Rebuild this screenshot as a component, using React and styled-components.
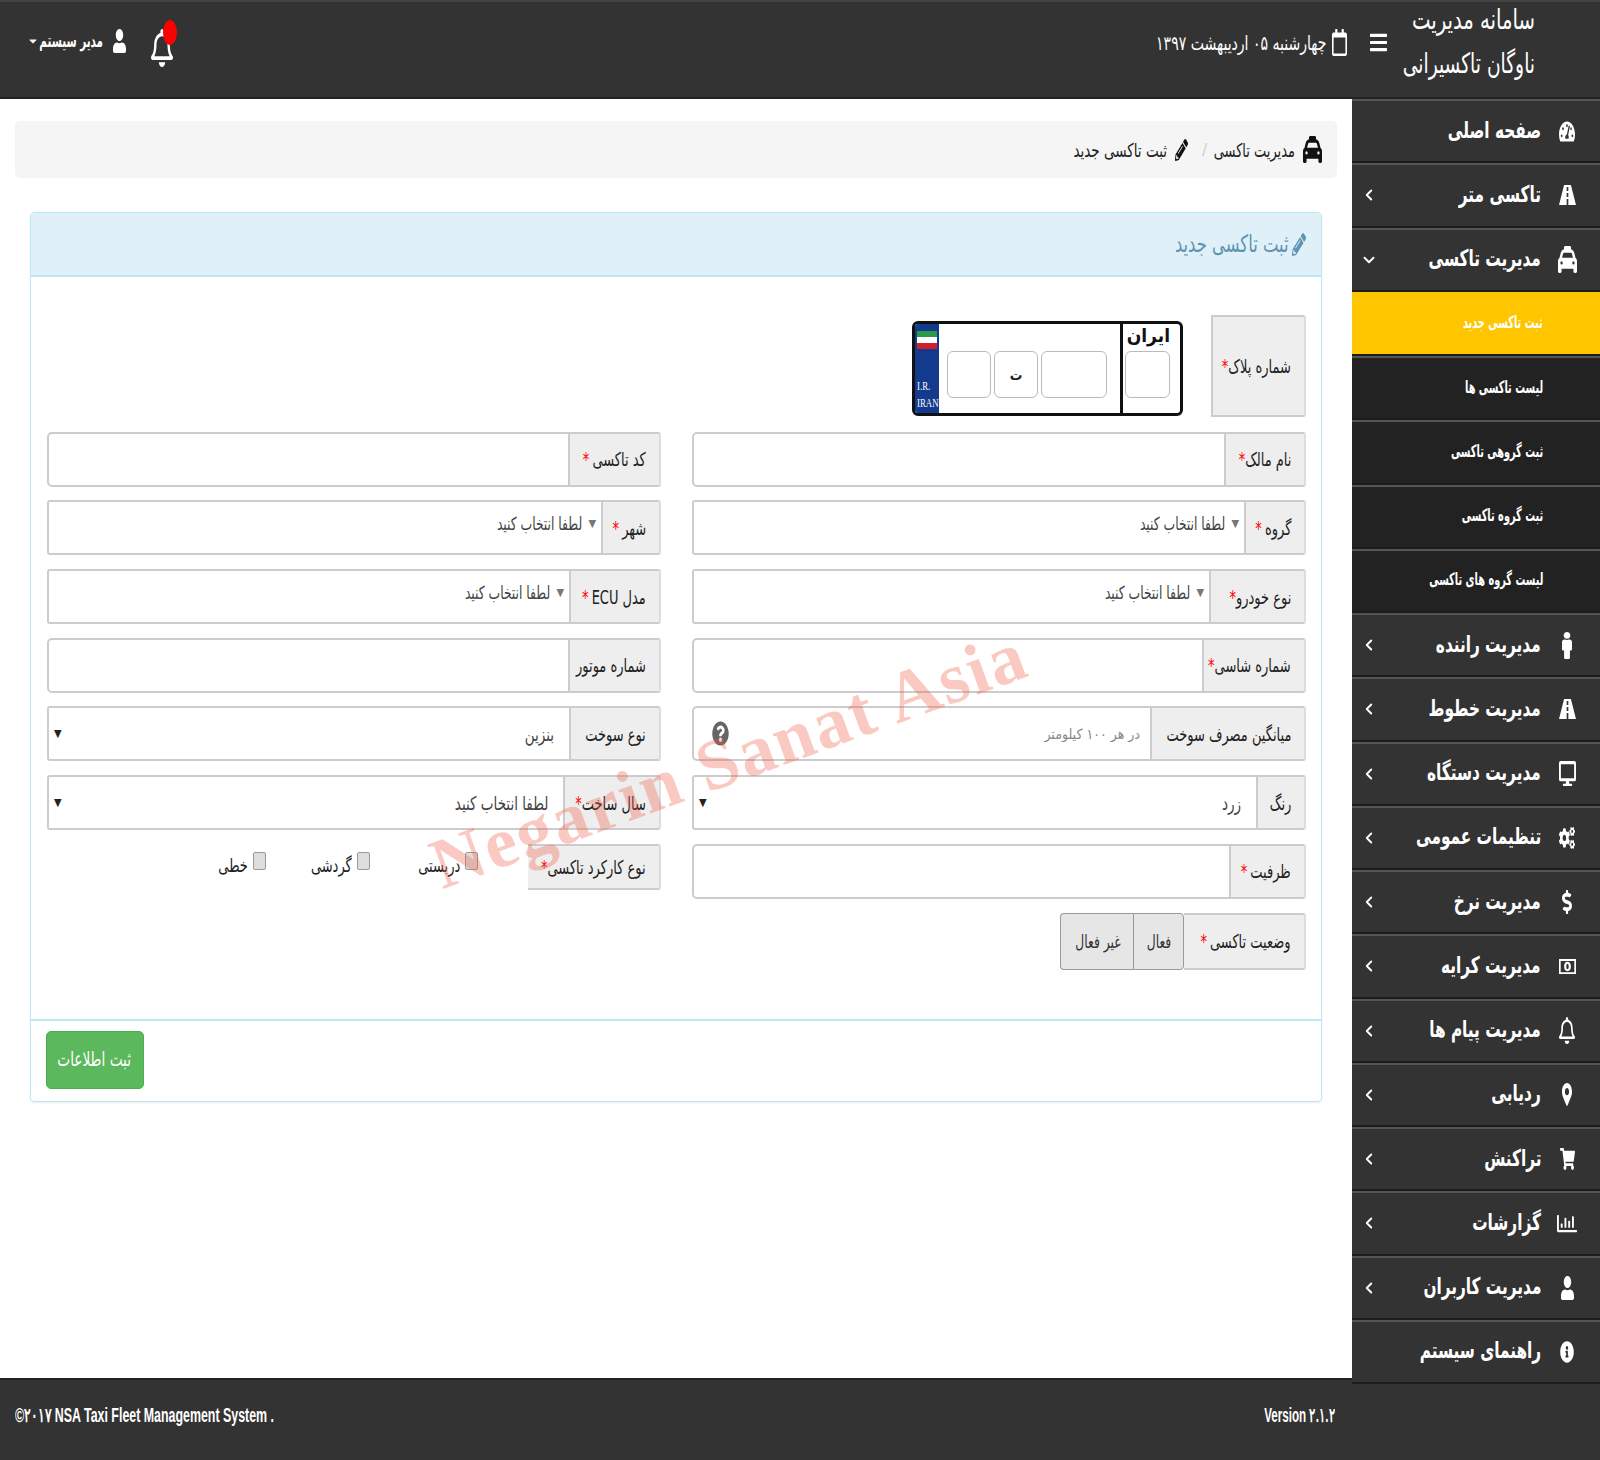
import React from 'react';
import styled, { createGlobalStyle } from 'styled-components';
import {
  FaTachometerAlt, FaMale, FaDesktop, FaCogs, FaDollarSign,
  FaRegBell, FaMapMarkerAlt, FaShoppingCart, FaRegChartBar, FaUser, FaInfoCircle, FaBars,
  FaRegCalendar, FaPencilAlt, FaCaretDown, FaQuestionCircle,
} from 'react-icons/fa';
import { FaTaxi } from 'react-icons/fa6';
import { ChevronLeft, ChevronDown } from 'lucide-react';

const FONT = `"DejaVu Sans Condensed", "DejaVu Sans", sans-serif`;

const Global = createGlobalStyle`
  html, body { margin: 0; padding: 0; background: #fff; }
  body { font-family: ${FONT}; color: #333; }
  * { box-sizing: border-box; }
`;

const Page = styled.div`
  position: relative;
  width: 1600px;
  height: 1460px;
  display: flex;
  flex-direction: column;
  direction: rtl;
  overflow: hidden;
`;

// the reference font is tall and narrow, so text is squeezed sideways from its start
const Narrow = styled.span`
  display: inline-block;
  white-space: nowrap;
  transform: scaleX(${p => p.$x || 0.76});
  transform-origin: 100% 50%;
  ${p => p.$w && `width: ${p.$w}px;`}
`;

const GlyphBox = styled.span`
  display: flex;
  flex: none;
  width: ${p => p.$w}px;
  height: ${p => p.$h}px;
  svg { width: 100%; height: 100%; display: block; }
`;

const Glyph = ({ icon: Icon, w, h }) => (
  <GlyphBox $w={w} $h={h}>
    <Icon preserveAspectRatio="none" />
  </GlyphBox>
);

const RoadIcon = props => (
  <svg viewBox="0 0 20 20" fill="currentColor" {...props}>
    <path
      fillRule="evenodd"
      d="M6 0H14L20 20H0ZM9 2V6H11V2ZM9 8V12H11V8ZM9 14V20H11V14Z"
    />
  </svg>
);

const CashIcon = props => (
  <svg viewBox="0 0 20 16" fill="currentColor" {...props}>
    <path
      fillRule="evenodd"
      d="M0 0H20V16H0ZM2 2V14H18V2ZM10 3C12.5 3 14 5 14 8S12.5 13 10 13 6 11 6 8 7.5 3 10 3ZM10 5C9 5 8.6 6.5 8.6 8S9 11 10 11 11.4 9.500 11.400 8 11 5 10 5Z"
    />
  </svg>
);

const Header = styled.header`
  height: 99px;
  flex: none;
  background: #333;
  border-top: 2px solid #444;
  border-bottom: 2px solid #222;
  padding-bottom: 14px;
  display: flex;
  align-items: center;
  color: #fff;
`;

const Brand = styled.div`
  width: 248px;
  flex: none;
  padding: 0 65px 1px 0;
  font-size: 28px;
  line-height: 44px;
`;

const BrandLine = styled(Narrow)`
  display: block;
`;

const MenuToggle = styled.div`
  flex: none;
  margin-right: -35px;
`;

const DateBox = styled.div`
  display: flex;
  align-items: center;
  gap: 6px;
  margin-right: 23px;
  font-size: 20px;
`;

const HeaderLeft = styled.div`
  margin-right: auto;
  margin-left: 27px;
  display: flex;
  align-items: center;
`;

const UserBox = styled.div`
  display: flex;
  align-items: center;
  gap: 10px;
  margin: 0 25px 4px 0;
  font-size: 18px;
  font-weight: 700;
`;

const Caret = styled.span`
  display: flex;
  margin-right: -9px;
`;

const BellBox = styled.div`
  position: relative;
  margin-top: 11px;
`;

const BellBadge = styled.span`
  position: absolute;
  top: -9px;
  left: 12px;
  width: 14px;
  height: 25px;
  border-radius: 50%;
  background: #f00;
`;

const Middle = styled.div`
  flex: 1;
  display: flex;
  min-height: 0;
`;

const Sidebar = styled.nav`
  width: 248px;
  flex: none;
  background: #333;
  margin-bottom: -6px;
  position: relative;
  z-index: 2;
`;

const NavItem = styled.div`
  height: 64.25px;
  display: flex;
  align-items: center;
  background: ${p => (p.$current ? '#ffc600' : p.$sub ? '#222' : '#333')};
  border-top: 2px solid ${p => (p.$current ? '#ffc600' : '#555')};
  border-bottom: 2px solid #1c1c1c;
  color: #fff;
  padding-right: ${p => (p.$sub ? '57px' : '20px')};
  padding-left: 8px;
`;

const NavIcon = styled.span`
  width: 26px;
  flex: none;
  display: flex;
  justify-content: center;
  margin-left: 13px;
`;

const NavLabel = styled.span`
  flex: 1;
  min-width: 0;
  padding-bottom: 3px;
  font-size: ${p => (p.$sub ? '17px' : '23px')};
  font-weight: 700;
`;

const NavArrow = styled.span`
  display: flex;
  flex: none;
`;

const Main = styled.main`
  flex: 1;
  min-width: 0;
  padding: 22px 15px 0;
`;

const Crumbs = styled.div`
  height: 57px;
  background: #f5f5f5;
  border-radius: 5px;
  display: flex;
  align-items: center;
  padding-right: 15px;
  gap: 8px;
  font-size: 19px;
  color: #222;
  margin-bottom: 34px;
  svg { color: #111; }
`;

const CrumbSep = styled.span`
  color: #ccc;
  margin: 0 1px 0 6px;
  font-size: 16px;
`;

const Panel = styled.section`
  height: 890px;
  margin: 0 15px;
  border: 1px solid #bce8f1;
  border-radius: 4px;
  display: flex;
  flex-direction: column;
  box-shadow: 0 1px 2px rgba(0, 0, 0, 0.08);
`;

const PanelHead = styled.div`
  height: 64px;
  flex: none;
  background: #dff0f8;
  border-bottom: 2px solid #bce8f1;
  color: #5f93b3;
  font-size: 24px;
  display: flex;
  align-items: center;
  gap: 3px;
  padding-right: 15px;
`;

const PanelBody = styled.div`
  flex: 1;
  padding: 38px 15px 0 16px;
`;

const PanelFoot = styled.div`
  height: 82px;
  flex: none;
  border-top: 2px solid #bce8f1;
  padding: 10px 15px;
`;

const Submit = styled.button`
  display: flex;
  align-items: center;
  justify-content: center;
  padding: 0 0 3px;
  margin-right: auto;
  width: 98px;
  height: 58px;
  border: 1px solid #4cae4c;
  border-radius: 5px;
  background: #5cb85c;
  color: #fff;
  font-family: ${FONT};
  font-size: 20px;
`;

const FormGrid = styled.div`
  display: grid;
  grid-template-columns: 614px 614px;
  column-gap: 31px;
  row-gap: 13.7px;
`;

const PlateRow = styled.div`
  grid-column: 1 / -1;
  display: flex;
  align-items: flex-start;
  gap: 28px;
  height: 102px;
  margin-bottom: 1px;
`;

const Field = styled.div`
  display: flex;
  height: ${p => p.$h || 55}px;
`;

const Label = styled.label`
  width: ${p => p.$w}px;
  flex: none;
  background: #eee;
  border: 2px solid #ccc;
  border-left-width: ${p => (p.$flat ? '2px' : '0')};
  border-right-color: #ddd;
  border-radius: 0 3px 3px 0;
  padding-right: 13px;
  display: flex;
  align-items: center;
  font-size: 19px;
  color: #222;
`;

const Star = styled.span`
  color: #f00;
  margin-right: ${p => (p.$tight ? 0 : 4)}px;
`;

const TextInput = styled.input`
  flex: 1;
  min-width: 0;
  border: 2px solid #ccc;
  border-radius: 5px 0 0 5px;
  background: #fff;
  padding: 0 10px;
  font-family: ${FONT};
  font-size: 16px;
  outline: none;
`;

const Picker = styled.div`
  flex: 1;
  min-width: 0;
  display: flex;
  align-items: center;
  gap: 6px;
  border: 2px solid #ccc;
  border-radius: 3px 0 0 3px;
  padding: 0 ${p => (p.$native ? 15 : 5)}px ${p => (p.$native ? 0 : 8)}px 5px;
  font-size: ${p => (p.$native ? 19 : 18)}px;
  color: #444;
`;

const PickerArrow = styled.span`
  color: #777;
  font-size: 11px;
  line-height: 1;
  ${p => p.$end && 'margin-right: auto; color: #222;'}
`;

const HintWrap = styled.div`
  position: relative;
  flex: 1;
  display: flex;
`;

const HintIcon = styled.span`
  position: absolute;
  left: 20px;
  top: 15px;
  color: #666;
`;

const Hint = styled(TextInput)`
  font-size: 14px;
  &::placeholder { color: #888; }
`;

const Checks = styled.div`
  flex: 1;
  display: flex;
  align-items: center;
  padding: 0 50px 3px 0;
  font-size: 19px;
  color: #222;
`;

const CheckItem = styled.label`
  display: flex;
  align-items: center;
  gap: 5px;
  width: ${p => p.$w}px;
`;

const CheckBox = styled.input`
  appearance: none;
  width: 13px;
  height: 18px;
  margin: 0 0 8px;
  background: #ddd;
  border: 1px solid #999;
  border-radius: 2px;
`;

const Toggle = styled.div`
  display: flex;
`;

const ToggleButton = styled.button`
  height: 57px;
  width: ${p => p.$w}px;
  padding: 0 12px;
  border: 1px solid #999;
  border-right-width: ${p => (p.$first ? '1px' : '0')};
  border-radius: ${p => (p.$first ? '0 4px 4px 0' : '4px 0 0 4px')};
  background: #e6e6e6;
  color: #333;
  font-family: ${FONT};
  font-size: 18px;
  text-align: right;
`;

const Plate = styled.div`
  width: 271px;
  height: 95px;
  margin-top: 6px;
  border: 3px solid #111;
  border-radius: 6px;
  display: flex;
  background: #fff;
  overflow: hidden;
`;

const PlateRegion = styled.div`
  width: 60px;
  flex: none;
  border-left: 3px solid #111;
  padding-right: 10px;
  display: flex;
  flex-direction: column;
  align-items: flex-start;
`;

const PlateName = styled.span`
  height: 27px;
  font-size: 19px;
  font-weight: 700;
  line-height: 22px;
  color: #111;
`;

const PlateCell = styled.input`
  width: ${p => p.$w}px;
  height: 47px;
  border: 1px solid #bbb;
  border-radius: 6px;
  background: #fff;
  text-align: center;
  padding: 0;
`;

const PlateMain = styled.div`
  flex: 1;
  display: flex;
  align-items: flex-start;
  gap: 3px;
  padding: 27px 13px 0 0;
`;

const PlateLetter = styled.div`
  width: 44px;
  height: 47px;
  border: 1px solid #bbb;
  border-radius: 6px;
  display: flex;
  align-items: center;
  justify-content: center;
  font-size: 14px;
  font-weight: 700;
  color: #222;
`;

const PlateBlue = styled.div`
  width: 24px;
  flex: none;
  background: #133a8c;
  color: #fff;
  direction: ltr;
  display: flex;
  flex-direction: column;
  padding: 6px 0 2px 2px;
  font-family: "Liberation Serif", serif;
  font-size: 13px;
  line-height: 17px;
`;

const PlateBlueLine = styled.span`
  display: block;
  transform: scaleX(0.68);
  transform-origin: 0 50%;
  white-space: nowrap;
`;

const PlateFlag = styled.svg`
  width: 20px;
  height: 20px;
  margin-bottom: auto;
`;

const Footer = styled.footer`
  height: 82px;
  flex: none;
  background: #333;
  border-top: 2px solid #222;
  color: #fff;
  display: flex;
  align-items: center;
  justify-content: space-between;
  padding: 0 265px 10px 15px;
  font-family: "Liberation Sans", sans-serif;
  font-size: 20px;
  font-weight: 700;
`;

const FootText = styled.span`
  direction: ltr;
  white-space: nowrap;
  transform: scaleX(${p => (p.$end ? 0.58 : 0.62)});
  transform-origin: ${p => (p.$end ? '100% 50%' : '0 50%')};
`;

const Watermark = styled.div`
  position: absolute;
  left: 729px;
  top: 760px;
  transform: translate(-50%, -50%) rotate(-20deg);
  direction: ltr;
  font-family: "Liberation Serif", serif;
  font-weight: 700;
  font-size: 72px;
  letter-spacing: 2px;
  color: rgba(236, 90, 70, 0.33);
  white-space: nowrap;
  pointer-events: none;
  z-index: 3;
`;

const MENU = [
  { text: 'صفحه اصلی', icon: FaTachometerAlt, w: 16, h: 23 },
  { text: 'تاکسی متر', icon: RoadIcon, w: 17, h: 20, arrow: 'left' },
  { text: 'مدیریت تاکسی', icon: FaTaxi, w: 19, h: 27, arrow: 'down' },
  { text: 'ثبت تاکسی جدید', sub: true, current: true },
  { text: 'لیست تاکسی ها', sub: true },
  { text: 'ثبت گروهی تاکسی', sub: true },
  { text: 'ثبت گروه تاکسی', sub: true },
  { text: 'لیست گروه های تاکسی', sub: true },
  { text: 'مدیریت راننده', icon: FaMale, w: 10, h: 27, arrow: 'left' },
  { text: 'مدیریت خطوط', icon: RoadIcon, w: 17, h: 20, arrow: 'left' },
  { text: 'مدیریت دستگاه', icon: FaDesktop, w: 17, h: 25, arrow: 'left' },
  { text: 'تنظیمات عمومی', icon: FaCogs, w: 16, h: 22, arrow: 'left' },
  { text: 'مدیریت نرخ', icon: FaDollarSign, w: 10, h: 24, arrow: 'left' },
  { text: 'مدیریت کرایه', icon: CashIcon, w: 17, h: 15, arrow: 'left' },
  { text: 'مدیریت پیام ها', icon: FaRegBell, w: 16, h: 27, arrow: 'left' },
  { text: 'ردیابی', icon: FaMapMarkerAlt, w: 10, h: 23, arrow: 'left' },
  { text: 'تراکنش', icon: FaShoppingCart, w: 15, h: 22, arrow: 'left' },
  { text: 'گزارشات', icon: FaRegChartBar, w: 20, h: 23, arrow: 'left' },
  { text: 'مدیریت کاربران', icon: FaUser, w: 13, h: 24, arrow: 'left' },
  { text: 'راهنمای سیستم', icon: FaInfoCircle, w: 14, h: 22 },
];

const FieldLabel = ({ w, text, req, tight, flat }) => (
  <Label $w={w} $flat={flat}>
    <Narrow>
      {text}
      {req && <Star $tight={tight}>*</Star>}
    </Narrow>
  </Label>
);

const Select = ({ text }) => (
  <Picker>
    <PickerArrow>▼</PickerArrow>
    <Narrow>{text}</Narrow>
  </Picker>
);

const NativeSelect = ({ text }) => (
  <Picker $native>
    <Narrow $x={0.79}>{text}</Narrow>
    <PickerArrow $end>▼</PickerArrow>
  </Picker>
);

const Flag = () => (
  <PlateFlag viewBox="0 0 20 20">
    <rect y="1" width="20" height="6" fill="#2a9a4a" />
    <rect y="7" width="20" height="6" fill="#fff" />
    <rect y="13" width="20" height="6" fill="#d0202c" />
  </PlateFlag>
);

export default function App() {
  return (
    <Page>
      <Global />
      <Header>
        <Brand>
          <BrandLine $x={0.78}>سامانه مدیریت</BrandLine>
          <BrandLine $x={0.74}>ناوگان تاکسیرانی</BrandLine>
        </Brand>
        <MenuToggle><Glyph icon={FaBars} w={17} h={23} /></MenuToggle>
        <DateBox>
          <Glyph icon={FaRegCalendar} w={15} h={27} />
          <Narrow $x={0.78}>چهارشنبه ۰۵ اردیبهشت ۱۳۹۷</Narrow>
        </DateBox>
        <HeaderLeft>
          <BellBox>
            <Glyph icon={FaRegBell} w={22} h={38} />
            <BellBadge />
          </BellBox>
          <UserBox>
            <Glyph icon={FaUser} w={13} h={24} />
            <Narrow $x={0.64} $w={63}>مدیر سیستم</Narrow>
            <Caret><FaCaretDown size={12} /></Caret>
          </UserBox>
        </HeaderLeft>
      </Header>

      <Middle>
        <Sidebar>
          {MENU.map(item => (
            <NavItem key={item.text} $sub={item.sub} $current={item.current}>
              {item.icon && <NavIcon><Glyph icon={item.icon} w={item.w} h={item.h} /></NavIcon>}
              <NavLabel $sub={item.sub}>
                <Narrow $x={item.sub ? 0.64 : 0.74}>{item.text}</Narrow>
              </NavLabel>
              {item.arrow === 'left' && <NavArrow><ChevronLeft size={18} strokeWidth={2.5} /></NavArrow>}
              {item.arrow === 'down' && <NavArrow><ChevronDown size={18} strokeWidth={2.5} /></NavArrow>}
            </NavItem>
          ))}
        </Sidebar>

        <Main>
          <Crumbs>
            <Glyph icon={FaTaxi} w={19} h={27} />
            <Narrow $w={79}>مدیریت تاکسی</Narrow>
            <CrumbSep>/</CrumbSep>
            <Glyph icon={FaPencilAlt} w={13} h={22} />
            <Narrow $w={93} $x={0.79}>ثبت تاکسی جدید</Narrow>
          </Crumbs>

          <Panel>
            <PanelHead>
              <Glyph icon={FaPencilAlt} w={14} h={23} />
              <Narrow>ثبت تاکسی جدید</Narrow>
            </PanelHead>
            <PanelBody>
              <FormGrid>
                <PlateRow>
                  <Field $h={102}>
                    <FieldLabel w={95} text="شماره پلاک" req tight flat />
                  </Field>
                  <Plate>
                    <PlateRegion>
                      <PlateName>ایران</PlateName>
                      <PlateCell $w={45} />
                    </PlateRegion>
                    <PlateMain>
                      <PlateCell $w={66} />
                      <PlateLetter>ت</PlateLetter>
                      <PlateCell $w={44} />
                    </PlateMain>
                    <PlateBlue>
                      <Flag />
                      <PlateBlueLine>I.R.</PlateBlueLine>
                      <PlateBlueLine>IRAN</PlateBlueLine>
                    </PlateBlue>
                  </Plate>
                </PlateRow>

                <Field><FieldLabel w={80} text="نام مالک" req tight /><TextInput /></Field>
                <Field><FieldLabel w={91} text="کد تاکسی" req /><TextInput /></Field>

                <Field><FieldLabel w={60} text="گروه" req /><Select text="لطفا انتخاب کنید" /></Field>
                <Field><FieldLabel w={58} text="شهر" req /><Select text="لطفا انتخاب کنید" /></Field>

                <Field><FieldLabel w={95} text="نوع خودرو" req tight /><Select text="لطفا انتخاب کنید" /></Field>
                <Field><FieldLabel w={90} text="مدل ECU" req /><Select text="لطفا انتخاب کنید" /></Field>

                <Field><FieldLabel w={102} text="شماره شاسی" req tight /><TextInput /></Field>
                <Field><FieldLabel w={91} text="شماره موتور" /><TextInput /></Field>

                <Field>
                  <FieldLabel w={154} text="میانگین مصرف سوخت" />
                  <HintWrap>
                    <Hint placeholder="در هر ۱۰۰ کیلومتر" />
                    <HintIcon><Glyph icon={FaQuestionCircle} w={17} h={25} /></HintIcon>
                  </HintWrap>
                </Field>
                <Field><FieldLabel w={90} text="نوع سوخت" /><NativeSelect text="بنزین" /></Field>

                <Field><FieldLabel w={48} text="رنگ" /><NativeSelect text="زرد" /></Field>
                <Field><FieldLabel w={96} text="سال ساخت" req tight /><NativeSelect text="لطفا انتخاب کنید" /></Field>

                <Field><FieldLabel w={75} text="ظرفیت" req /><TextInput /></Field>
                <Field $h={46}>
                  <FieldLabel w={133} text="نوع کارکرد تاکسی" req tight />
                  <Checks>
                    <CheckItem $w={108}><CheckBox type="checkbox" /><Narrow>دربستی</Narrow></CheckItem>
                    <CheckItem $w={104}><CheckBox type="checkbox" /><Narrow>گردشی</Narrow></CheckItem>
                    <CheckItem $w={60}><CheckBox type="checkbox" /><Narrow>خطی</Narrow></CheckItem>
                  </Checks>
                </Field>

                <Field $h={57}>
                  <FieldLabel w={122} text="وضعیت تاکسی" req />
                  <Toggle>
                    <ToggleButton $w={51} $first><Narrow>فعال</Narrow></ToggleButton>
                    <ToggleButton $w={73}><Narrow>غیر فعال</Narrow></ToggleButton>
                  </Toggle>
                </Field>
              </FormGrid>
            </PanelBody>
            <PanelFoot>
              <Submit><Narrow $w={72}>ثبت اطلاعات</Narrow></Submit>
            </PanelFoot>
          </Panel>
        </Main>
      </Middle>

      <Footer>
        <FootText $end>Version ۲.۱.۲</FootText>
        <FootText>©۲۰۱۷ NSA Taxi Fleet Management System .</FootText>
      </Footer>

      <Watermark>Negarin Sanat Asia</Watermark>
    </Page>
  );
}
